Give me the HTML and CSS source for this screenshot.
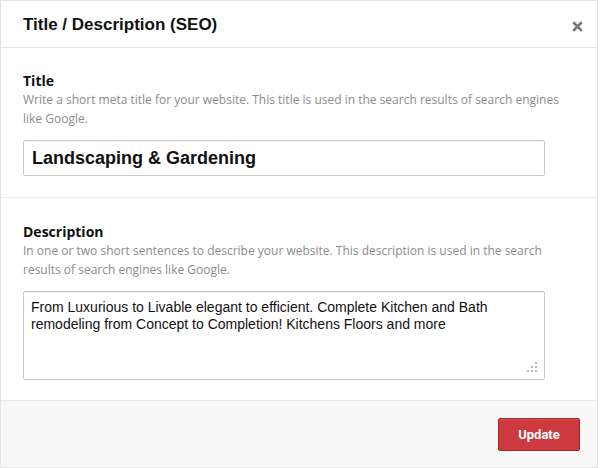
FILE: index.html
```html
<!DOCTYPE html>
<html>
<head>
<meta charset="utf-8">
<link rel="stylesheet" href="styles.css">
</head>
<body>
<div class="modal">
  <div class="modal-header">
    <h1 class="modal-title">Title / Description (SEO)</h1>
    <span class="close">
      <svg width="11" height="11" viewBox="0 0 11 11"><path d="M2 2 L9 9 M9 2 L2 9" stroke="#777" stroke-width="2.6" stroke-linecap="round"/></svg>
    </span>
  </div>
  <div class="section section-title">
    <div class="label">Title</div>
    <div class="help">Write a short meta title for your website. This title is used in the search results of search engines<br>like Google.</div>
    <div class="input">Landscaping &amp; Gardening</div>
  </div>
  <div class="section section-desc">
    <div class="label">Description</div>
    <div class="help">In one or two short sentences to describe your website. This description is used in the search<br>results of search engines like Google.</div>
    <div class="textarea">From Luxurious to Livable elegant to efficient. Complete Kitchen and Bath remodeling from Concept to Completion! Kitchens Floors and more
      <svg class="grip" width="12" height="12" viewBox="0 0 12 12"><g fill="#b8b8b8"><rect x="9" y="1" width="2" height="2"/><rect x="5" y="5" width="2" height="2"/><rect x="9" y="5" width="2" height="2"/><rect x="1" y="9" width="2" height="2"/><rect x="5" y="9" width="2" height="2"/><rect x="9" y="9" width="2" height="2"/></g></svg>
    </div>
  </div>
  <div class="modal-footer">
    <button class="btn-update">Update</button>
  </div>
</div>
</body>
</html>
```
FILE: styles.css
```css
html, body { margin: 0; padding: 0; background: #fff; }
.modal {
  width: 598px;
  height: 468px;
  box-sizing: border-box;
  border: 1px solid #e3e3e3;
  display: flex;
  flex-direction: column;
  font-family: "Liberation Sans", Arial, sans-serif;
}
.modal-header {
  height: 46px;
  border-bottom: 1px solid #e3e3e3;
  display: flex;
  align-items: center;
  justify-content: space-between;
  padding: 0 14px 0 22px;
}
.modal-title {
  margin: 0;
  font-size: 17px;
  font-weight: bold;
  color: #111;
  position: relative;
  top: 1px;
}
.close { display: flex; position: relative; top: 2px; }
.section {
  padding: 24px 6px 0 22px;
  border-bottom: 1px solid #ebebeb;
}
.section-title { height: 150px; box-sizing: border-box; }
.section-desc { height: 203px; box-sizing: border-box; padding-top: 25px; }
.label {
  font-family: "Open Sans", sans-serif;
  font-weight: bold;
  font-size: 14px;
  color: #111;
  line-height: 17px;
}
.help {
  font-family: "Open Sans", sans-serif;
  font-size: 12px;
  color: #8c8c8c;
  line-height: 18.5px;
  margin-top: 2px;
  white-space: nowrap;
}
.input {
  margin-top: 12px;
  width: 522px;
  height: 36px;
  box-sizing: border-box;
  border: 1px solid #c9c9c9;
  border-radius: 2px;
  box-shadow: inset 0 1px 1px rgba(0,0,0,0.05);
  font-size: 18px;
  font-weight: bold;
  color: #111;
  padding: 0 8px;
  display: flex;
  align-items: center;
}
.textarea {
  position: relative;
  margin-top: 12px;
  width: 522px;
  height: 89px;
  box-sizing: border-box;
  border: 1px solid #c9c9c9;
  border-radius: 2px;
  box-shadow: inset 0 1px 1px rgba(0,0,0,0.05);
  font-size: 14px;
  color: #111;
  line-height: 17px;
  padding: 7px 7px;
}
.grip { position: absolute; right: 6px; bottom: 6px; }
.modal-footer {
  flex: 1;
  background: #f8f8f8;
  display: flex;
  align-items: center;
  justify-content: flex-end;
  padding-right: 17px;
}
.btn-update {
  width: 82px;
  height: 33px;
  background: #cc3a3f;
  border: 1px solid #a8262b;
  border-radius: 2px;
  color: #fff;
  font-family: Roboto, sans-serif;
  font-weight: bold;
  font-size: 13px;
  box-shadow: inset 0 1px 0 rgba(255,255,255,0.15);
  margin-top: 0px;
}
```
